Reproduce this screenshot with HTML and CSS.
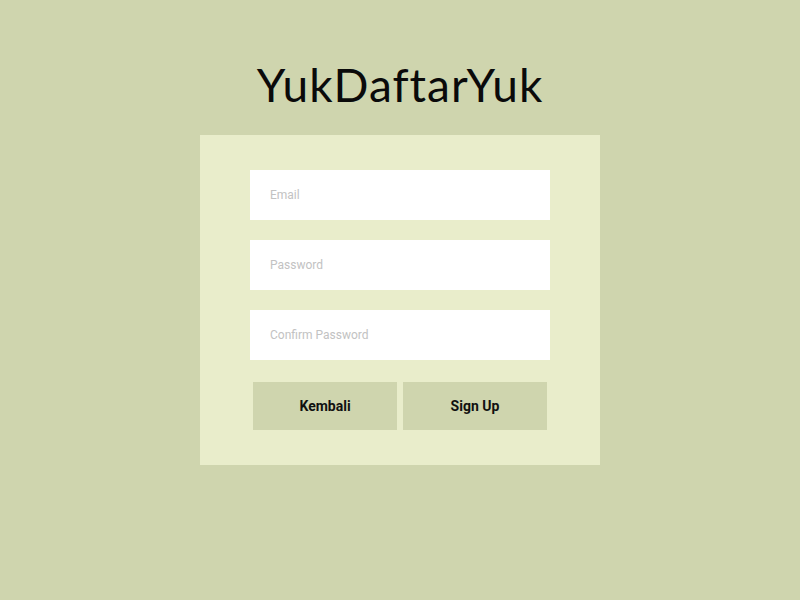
FILE: index.html
```html
<!DOCTYPE html>
<html lang="id">
<head>
<meta charset="utf-8">
<title>YukDaftarYuk</title>
<link rel="stylesheet" href="styles.css">
</head>
<body>
<main class="page">
  <h1 class="title">YukDaftarYuk</h1>
  <form class="card">
    <input class="field" type="email" placeholder="Email">
    <input class="field" type="password" placeholder="Password">
    <input class="field" type="password" placeholder="Confirm Password">
    <div class="actions">
      <button type="button" class="btn">Kembali</button>
      <button type="submit" class="btn">Sign Up</button>
    </div>
  </form>
</main>
</body>
</html>
```
FILE: styles.css
```css
html, body {
  margin: 0;
  height: 100%;
  background: #cfd5ae;
}
.page {
  display: flex;
  flex-direction: column;
  align-items: center;
  padding-top: 56px;
}
.title {
  margin: 0;
  height: 79px;
  font-family: Lato, "DejaVu Sans", sans-serif;
  font-weight: 400;
  font-size: 46px;
  line-height: 58px;
  color: #0a0a0a;
  letter-spacing: 1px;
}
.card {
  width: 300px;
  padding: 35px 50px;
  background: #e9edcb;
  display: flex;
  flex-direction: column;
  gap: 20px;
}
.field {
  box-sizing: border-box;
  width: 300px;
  height: 50px;
  border: none;
  outline: none;
  padding: 0 20px;
  margin: 0;
  background: #fff;
  font-family: Roboto, "Liberation Sans", sans-serif;
  font-size: 12px;
  color: #333;
}
.field::placeholder {
  color: #c2c2c2;
}
.actions {
  display: flex;
  gap: 6px;
  padding: 2px 3px 0;
}
.btn {
  flex: 1;
  height: 48px;
  border: none;
  margin: 0;
  background: #cfd5ae;
  font-family: Roboto, "Liberation Sans", sans-serif;
  font-weight: 700;
  font-size: 14px;
  color: #111;
  cursor: pointer;
}
```
